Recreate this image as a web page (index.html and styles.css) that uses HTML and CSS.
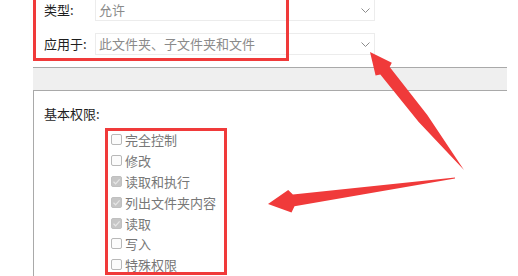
FILE: index.html
```html
<!DOCTYPE html>
<html lang="zh-CN">
<head>
<meta charset="utf-8">
<title>权限</title>
<link rel="stylesheet" href="styles.css">
</head>
<body>
<div class="page">
  <div class="fields">
    <div class="row row-first">
      <span class="label">类型:</span>
      <div class="select">
        <span class="value">允许</span>
        <svg class="chev" width="9" height="5" viewBox="0 0 9 5"><path d="M0.5 0.5 L4.5 4.5 L8.5 0.5" fill="none" stroke="#8c8c8c" stroke-width="1"/></svg>
      </div>
    </div>
    <div class="row row-second">
      <span class="label">应用于:</span>
      <div class="select">
        <span class="value">此文件夹、子文件夹和文件</span>
        <svg class="chev" width="9" height="5" viewBox="0 0 9 5"><path d="M0.5 0.5 L4.5 4.5 L8.5 0.5" fill="none" stroke="#8c8c8c" stroke-width="1"/></svg>
      </div>
    </div>
  </div>
  <div class="band"></div>
  <div class="panel">
    <div class="heading">基本权限:</div>
    <ul class="perms">
      <li><span class="box"></span>完全控制</li>
      <li><span class="box"></span>修改</li>
      <li><span class="box checked"><svg width="11" height="11" viewBox="0 0 11 11"><path d="M2.5 5.8 L4.6 7.8 L8.6 3.4" fill="none" stroke="#e6e6e6" stroke-width="1.2"/></svg></span>读取和执行</li>
      <li><span class="box checked"><svg width="11" height="11" viewBox="0 0 11 11"><path d="M2.5 5.8 L4.6 7.8 L8.6 3.4" fill="none" stroke="#e6e6e6" stroke-width="1.2"/></svg></span>列出文件夹内容</li>
      <li><span class="box checked"><svg width="11" height="11" viewBox="0 0 11 11"><path d="M2.5 5.8 L4.6 7.8 L8.6 3.4" fill="none" stroke="#e6e6e6" stroke-width="1.2"/></svg></span>读取</li>
      <li><span class="box"></span>写入</li>
      <li><span class="box"></span>特殊权限</li>
    </ul>
  </div>

  <div class="highlight hl-fields"></div>
  <div class="highlight hl-perms"></div>

  <svg class="arrows" width="518" height="276" viewBox="0 0 518 276">
    <polygon fill="#f03a3a" points="370,52 391.8,62.8 389.7,67.1 427.3,115.1 464,170 418.7,121.9 380.3,74.5 375.6,75.6"/>
    <polygon fill="#f03a3a" points="268,204 288.2,190.0 292.9,194.5 455,177.6 455,178.6 294.5,206.3 291.5,212.5"/>
  </svg>
</div>
</body>
</html>
```

FILE: styles.css
```css
html, body {
  margin: 0;
  padding: 0;
  background: #ffffff;
}

.page {
  position: relative;
  width: 518px;
  height: 276px;
  overflow: hidden;
  font-family: "Noto Sans CJK SC", "Noto Sans", sans-serif;
  font-size: 13px;
  color: #1e1e1e;
}

.fields {
  padding-left: 44px;
  margin-top: -1px;
}

.row {
  display: flex;
  align-items: center;
  height: 22px;
}

.row-second {
  margin-top: 12px;
}

.label {
  width: 51px;
  line-height: 22px;
}

.select {
  box-sizing: border-box;
  width: 280px;
  height: 22px;
  border: 1px solid #ececec;
  background: #ffffff;
  display: flex;
  align-items: center;
  justify-content: space-between;
  padding: 0 4px 0 3px;
}

.value {
  color: #8a8a8a;
  line-height: 20px;
}

.chev {
  display: block;
}

.band {
  margin-top: 12px;
  margin-left: 33px;
  width: 474px;
  height: 22px;
  border-top: 1px solid #a9a9a9;
  border-bottom: 1px solid #a9a9a9;
  background: #efefef;
}

.panel {
  margin-left: 33px;
  border-left: 1px solid #a9a9a9;
  height: 200px;
  padding-top: 13px;
  box-sizing: border-box;
}

.heading {
  padding-left: 10px;
  line-height: 20px;
}

.perms {
  list-style: none;
  margin: 5.6px 0 0 77px;
  padding: 0;
}

.perms li {
  display: flex;
  align-items: center;
  height: 20.8px;
  color: #777777;
  gap: 3px;
}

.box {
  box-sizing: border-box;
  width: 11px;
  height: 11px;
  border: 1px solid #b8b8b8;
  border-radius: 2px;
  background: #fbfbfb;
  flex: none;
  position: relative;
}

.box.checked {
  background: #c6c6c6;
  border-color: #c0c0c0;
}

.box svg {
  position: absolute;
  left: -1px;
  top: -1px;
}

.highlight {
  position: absolute;
  box-sizing: border-box;
  border: 3px solid #f03a3a;
}

.hl-fields {
  left: 33px;
  top: -3px;
  width: 256px;
  height: 64px;
}

.hl-perms {
  left: 105px;
  top: 128px;
  width: 122px;
  height: 147px;
}

.arrows {
  position: absolute;
  left: 0;
  top: 0;
  pointer-events: none;
}
```
